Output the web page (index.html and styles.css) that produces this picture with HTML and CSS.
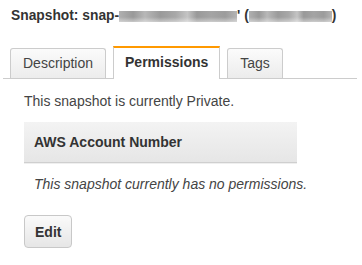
FILE: index.html
```html
<!DOCTYPE html>
<html lang="en">
<head>
<meta charset="utf-8">
<title>Snapshot permissions</title>
<link rel="stylesheet" href="styles.css">
</head>
<body>
  <h1 class="title">Snapshot: snap-<span class="redact redact-long"></span>' (<span class="redact redact-short"></span>)</h1>

  <nav class="tabs">
    <div class="tab">Description</div>
    <div class="tab tab-active">Permissions</div>
    <div class="tab">Tags</div>
  </nav>

  <section class="panel">
    <p class="status">This snapshot is currently Private.</p>
    <div class="table">
      <div class="table-head">AWS Account Number</div>
      <div class="table-empty">This snapshot currently has no permissions.</div>
    </div>
    <button class="btn">Edit</button>
  </section>
</body>
</html>
```

FILE: styles.css
```css
* { box-sizing: border-box; }

body {
  margin: 0;
  background: #fff;
  color: #444;
  font-family: "Liberation Sans", Arial, Helvetica, sans-serif;
  font-size: 14px;
  line-height: 16px;
}

.title {
  margin: 0;
  padding: 8px 0 0 11px;
  font-size: 13.8px;
  line-height: 15px;
  font-weight: bold;
  color: #333;
  white-space: nowrap;
}

.redact {
  display: inline-block;
  height: 11px;
  vertical-align: -2px;
  background:
    linear-gradient(to bottom, rgba(255,255,255,0) 55%, rgba(255,255,255,0.45) 100%),
    linear-gradient(to right, #b0b0b0 0, #999 12%, #b8b8b8 22%, #9a9a9a 35%, #a8a8a8 48%, #c4c4c4 58%, #999 66%, #a4a4a4 78%, #9c9c9c 90%, #b4b4b4 100%);
  filter: blur(0.6px);
}
.redact-long { width: 118px; }
.redact-short { width: 83px; }

.tabs {
  display: flex;
  align-items: flex-end;
  gap: 7px;
  margin: 23px 5px 0 3px;
  padding-left: 7px;
  border-bottom: 1px solid #ccc;
}

.tab {
  height: 30px;
  padding: 0 12px;
  line-height: 29px;
  border: 1px solid #ccc;
  border-bottom: none;
  border-radius: 3px 3px 0 0;
  background: linear-gradient(to bottom, #fbfbfb, #ececec);
  color: #444;
  white-space: nowrap;
}

.tab-active {
  height: 33px;
  padding: 0 11px;
  margin-bottom: -1px;
  border-top: 2px solid #f90;
  border-radius: 0;
  background: #fff;
  font-weight: bold;
  color: #333;
}

.panel {
  padding: 14px 0 0 24px;
}

.status {
  margin: 0;
}

.table {
  width: 273px;
  margin-top: 13px;
}

.table-head {
  height: 41px;
  padding-left: 10px;
  line-height: 40px;
  font-weight: bold;
  color: #333;
  background: linear-gradient(to bottom, #f3f3f3, #e6e6e6);
  border-bottom: 1px solid #cfcfcf;
  box-shadow: 0 1px 0 #efefef;
}

.table-empty {
  padding: 13px 0 0 10px;
  font-style: italic;
  color: #444;
  white-space: nowrap;
}

.btn {
  display: block;
  margin-top: 23px;
  height: 33px;
  padding: 0 10px;
  border: 1px solid #c8c8c8;
  border-radius: 4px;
  background: linear-gradient(to bottom, #fafafa, #e6e6e6);
  font-family: inherit;
  font-size: 14px;
  font-weight: bold;
  color: #333;
}
```
